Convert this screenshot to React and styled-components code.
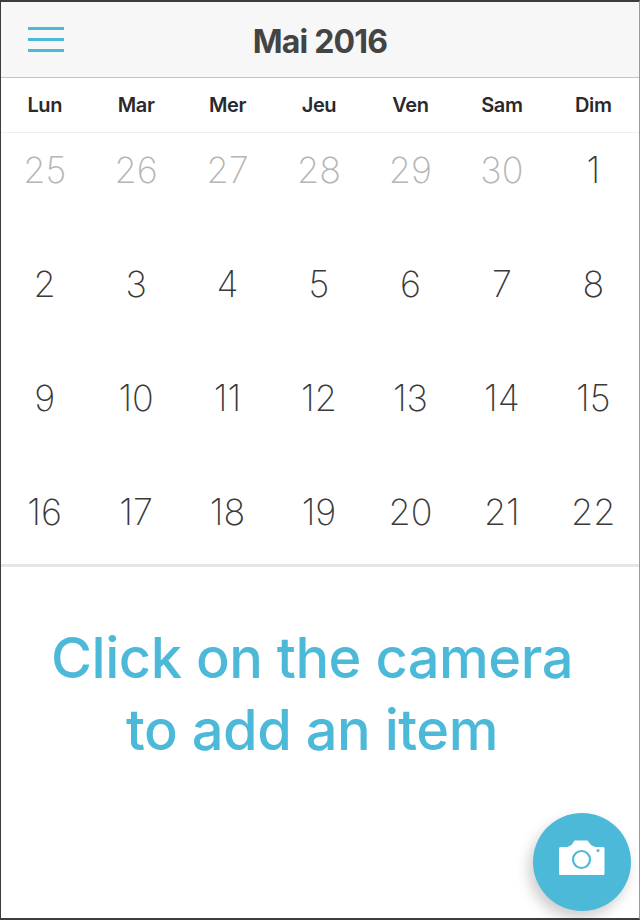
import React from 'react';
import styled, { createGlobalStyle } from 'styled-components';

const Global = createGlobalStyle`
  html, body {
    margin: 0;
    padding: 0;
    background: #fff;
  }
`;

const Page = styled.div`
  position: relative;
  box-sizing: border-box;
  width: 640px;
  height: 920px;
  overflow: hidden;
  border: 1px solid #3c3c3c;
  border-top-width: 2px;
  border-bottom-width: 2px;
  border-right-color: #9a9a9a;
  font-family: Inter, "Noto Sans", sans-serif;
  background: #fff;
`;

const Header = styled.header`
  display: flex;
  align-items: center;
  justify-content: center;
  position: relative;
  height: 75px;
  background: #f7f7f7;
  border-bottom: 1px solid #c4c4c4;
`;

const Burger = styled.div`
  position: absolute;
  left: 27px;
  top: 25px;
  display: flex;
  flex-direction: column;
  gap: 8px;
`;

const BurgerLine = styled.span`
  display: block;
  width: 36px;
  height: 3px;
  background: #4db9d9;
`;

const Title = styled.h1`
  margin: 3px 0 0;
  font-size: 32px;
  font-weight: 700;
  letter-spacing: -0.8px;
  color: #444444;
`;

const WeekRow = styled.div`
  display: grid;
  grid-template-columns: repeat(7, 1fr);
  width: 640px;
  height: 54px;
  margin-left: -2px;
  align-items: center;
  border-bottom: 1px solid #eeeeee;
`;

const WeekDay = styled.div`
  text-align: center;
  font-size: 20px;
  font-weight: 600;
  letter-spacing: -0.4px;
  color: #2a2a2a;
`;

const DayGrid = styled.div`
  display: grid;
  grid-template-columns: repeat(7, 1fr);
  grid-auto-rows: 114px;
  width: 640px;
  height: 431px;
  margin-left: -2px;
  border-bottom: 3px solid #e6e6e6;
`;

const Day = styled.div`
  height: 75px;
  line-height: 75px;
  text-align: center;
  font-size: 36px;
  font-weight: 200;
  color: ${(p) => (p.$muted ? '#b5b5b5' : '#3a3a3a')};
`;

const Hint = styled.p`
  margin: 0;
  padding-top: 55px;
  padding-right: 16px;
  text-align: center;
  font-size: 56px;
  line-height: 72px;
  font-weight: 500;
  letter-spacing: -0.5px;
  color: #4db9d9;
`;

const CameraButton = styled.button`
  position: absolute;
  left: 532px;
  top: 811px;
  display: flex;
  align-items: center;
  justify-content: center;
  width: 98px;
  height: 98px;
  padding: 0 0 9px;
  border: 0;
  border-radius: 50%;
  background: #4db9d9;
  box-shadow: -4px 7px 14px rgba(0, 0, 0, 0.2);
`;

const prevMonth = [25, 26, 27, 28, 29, 30];
const days = Array.from({ length: 22 }, (_, i) => i + 1);
const weekDays = ['Lun', 'Mar', 'Mer', 'Jeu', 'Ven', 'Sam', 'Dim'];

const CameraIcon = () => (
  <svg width="46" height="36" viewBox="0 0 46 36">
    <path
      d="M1.500 7h7l4-2 3-4.500h13l3.500 4.500 4 2h8a1.500 1.500 0 0 1 1.500 1.500v25a1.500 1.500 0 0 1-1.500 1.500H1.500A1.500 1.500 0 0 1 0 33.500v-25A1.500 1.500 0 0 1 1.500 7z"
      fill="#fff"
    />
    <circle cx="22.500" cy="19.500" r="8.500" fill="none" stroke="#4db9d9" strokeWidth="2.200" />
    <circle cx="39" cy="10.500" r="1.500" fill="#4db9d9" />
  </svg>
);

export default function App() {
  return (
    <Page>
      <Global />
      <Header>
        <Burger>
          <BurgerLine />
          <BurgerLine />
          <BurgerLine />
        </Burger>
        <Title>Mai 2016</Title>
      </Header>
      <WeekRow>
        {weekDays.map((d) => (
          <WeekDay key={d}>{d}</WeekDay>
        ))}
      </WeekRow>
      <DayGrid>
        {prevMonth.map((d) => (
          <Day key={'p' + d} $muted>{d}</Day>
        ))}
        {days.map((d) => (
          <Day key={d}>{d}</Day>
        ))}
      </DayGrid>
      <Hint>
        Click on the camera
        <br />
        to add an item
      </Hint>
      <CameraButton aria-label="camera">
        <CameraIcon />
      </CameraButton>
    </Page>
  );
}
